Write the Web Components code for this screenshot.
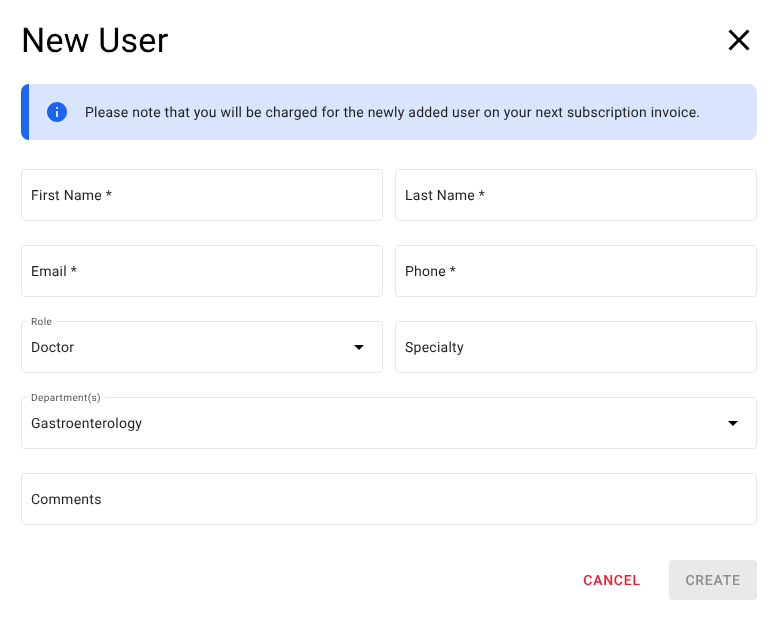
<!DOCTYPE html>
<html lang="en"><head><meta charset="utf-8"><title>New User</title>
<style>
html,body{margin:0;background:#fff;font-family:Roboto,"Liberation Sans",sans-serif;color:#000;text-rendering:geometricPrecision}
</style></head><body>
<template id="t-dialog"><style>
:host{display:flex;flex-direction:column;box-sizing:border-box;width:780px;height:627px;padding:0 23px 0 21px;will-change:transform}
header{display:flex;justify-content:space-between;align-items:center;height:80px;margin-bottom:4px}
h1{margin:0;padding-top:2px;font:400 34px/40px Roboto,sans-serif;letter-spacing:.25px;color:#000}
.grid{display:grid;grid-template-columns:1fr 1fr;gap:24px 12px;margin-top:29px}
footer{display:flex;justify-content:flex-end;align-items:center;gap:13px;margin-top:35px}
svg{display:block}
</style>
<header><h1><slot name="title"></slot></h1><svg width="36" height="36" viewBox="0 0 24 24" fill="#000"><path d="M19 6.41 17.59 5 12 10.59 6.41 5 5 6.41 10.59 12 5 17.59 6.41 19 12 13.41 17.59 19 19 17.59 13.41 12z"/></svg></header>
<slot name="alert"></slot>
<div class="grid"><slot></slot></div>
<footer><slot name="actions"></slot></footer>
</template>
<template id="t-alert"><style>
:host{display:flex;align-items:center;box-sizing:border-box;height:56px;background:#d9e5fc;border-left:8px solid #1d65f0;border-radius:8px;padding-left:16px;font:400 14px/20px Roboto,sans-serif;letter-spacing:.25px;color:rgba(0,0,0,.87)}
svg{flex:none;margin-right:16px}
.t{padding-top:2px}
</style>
<svg width="24" height="24" viewBox="0 0 24 24" fill="#1d65f0"><path d="M12 2C6.48 2 2 6.48 2 12s4.48 10 10 10 10-4.48 10-10S17.52 2 12 2zm1 15h-2v-6h2v6zm0-8h-2V7h2v2z"/></svg><span class="t"><slot></slot></span>
</template>
<template id="t-field"><style>
:host{display:flex;align-items:center;position:relative;box-sizing:border-box;height:52px;border:1px solid #e8e8e8;border-radius:4px;padding:0 9px;font:400 14px/20px Roboto,sans-serif;letter-spacing:.25px;color:rgba(0,0,0,.87)}
:host([wide]){grid-column:1 / -1}
.v{flex:1;padding-top:2px}
.l{position:absolute;left:5px;top:-5px;padding:0 4px;background:#fff;font-size:10px;line-height:12px;letter-spacing:.4px;color:rgba(0,0,0,.7)}
.l:empty{display:none}
svg{display:none;flex:none;margin-right:2px}
:host([select]) svg{display:block}
</style>
<span class="l"></span><span class="v"><slot></slot></span>
<svg width="24" height="24" viewBox="0 0 24 24" fill="#000"><path d="M7 10l5 5 5-5z"/></svg>
</template>
<template id="t-btn"><style>
:host{display:flex;align-items:center;justify-content:center;box-sizing:border-box;height:40px;min-width:88px;padding-top:2px;border-radius:4px;font:500 14px/20px Roboto,sans-serif;letter-spacing:.75px;text-transform:uppercase;color:#ee1c2e}
:host([disabled]){background:#e9e9e9;color:#8e8e8e}
</style><slot></slot></template>

<user-dialog>
<span slot="title">New User</span>
<info-alert slot="alert">Please note that you will be charged for the newly added user on your next subscription invoice.</info-alert>
<form-field>First Name *</form-field>
<form-field>Last Name *</form-field>
<form-field>Email *</form-field>
<form-field>Phone *</form-field>
<form-field select label="Role">Doctor</form-field>
<form-field>Specialty</form-field>
<form-field select wide label="Department(s)">Gastroenterology</form-field>
<form-field wide>Comments</form-field>
<action-btn slot="actions">Cancel</action-btn>
<action-btn slot="actions" disabled>Create</action-btn>
</user-dialog>
<script>
class Base extends HTMLElement{
  constructor(){super();const t=document.getElementById(this.constructor.tpl);this.attachShadow({mode:'open'}).appendChild(t.content.cloneNode(true));}
}
class UserDialog extends Base{static tpl='t-dialog'}
class InfoAlert extends Base{static tpl='t-alert'}
class FormField extends Base{static tpl='t-field';
  connectedCallback(){this.shadowRoot.querySelector('.l').textContent=this.getAttribute('label')||'';}
}
class ActionBtn extends Base{static tpl='t-btn'}
customElements.define('user-dialog',UserDialog);
customElements.define('info-alert',InfoAlert);
customElements.define('form-field',FormField);
customElements.define('action-btn',ActionBtn);
</script>
</body></html>
